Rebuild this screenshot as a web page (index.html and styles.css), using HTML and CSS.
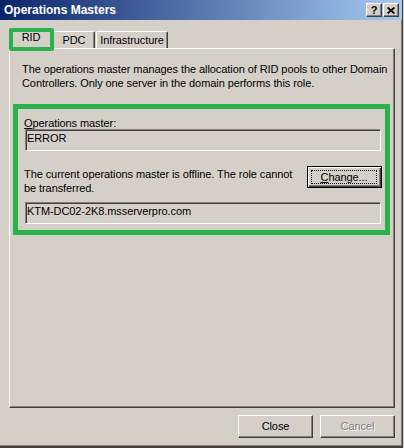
FILE: index.html
```html
<!DOCTYPE html>
<html>
<head>
<meta charset="utf-8">
<title>Operations Masters</title>
<link rel="stylesheet" href="styles.css">
</head>
<body>
<div class="window">
  <div class="titlebar">
    <span class="title">Operations Masters</span>
    <div class="tbtns">
      <span class="tbtn help">?</span>
      <span class="tbtn close"><svg width="8" height="7" viewBox="0 0 8 7"><path d="M0.6 0.5 L7.4 6.5 M7.4 0.5 L0.6 6.5" stroke="#000" stroke-width="1.7" fill="none"/></svg></span>
    </div>
  </div>
  <div class="content">
    <div class="tabs">
      <div class="tab selected">RID</div>
      <div class="tab pdc">PDC</div>
      <div class="tab infra">Infrastructure</div>
    </div>
    <div class="panel">
      <p class="desc">The operations master manages the allocation of RID pools to other Domain<br>Controllers. Only one server in the domain performs this role.</p>
      <div class="group">
        <div class="label"><u>O</u>perations master:</div>
        <div class="field">ERROR</div>
        <div class="row">
          <div class="msg">The current operations master is offline. The role cannot<br>be transferred.</div>
          <div class="btn default"><span class="focus"><u>C</u>hange...</span></div>
        </div>
        <div class="field">KTM-DC02-2K8.msserverpro.com</div>
      </div>
    </div>
    <div class="buttons">
      <div class="btn">Close</div>
      <div class="btn disabled">Cancel</div>
    </div>
  </div>
</div>
</body>
</html>
```

FILE: styles.css
```css
* { box-sizing: border-box; }
html, body { margin: 0; padding: 0; }
body {
  background: #d4d0c8;
  font-family: "Liberation Sans", Arial, sans-serif;
  font-size: 11px;
  letter-spacing: -0.08px;
  color: #000;
  width: 404px;
  height: 448px;
  overflow: hidden;
}
.window {
  width: 403px;
  height: 448px;
  display: flex;
  flex-direction: column;
  border-right: 1px solid #404040;
  border-bottom: 2px solid #404040;
  box-shadow: inset -1px -1px 0 #808080;
}
.titlebar {
  height: 20px;
  display: flex;
  align-items: center;
  justify-content: space-between;
  padding: 0 3px 0 4px;
  background: linear-gradient(to right, #0a246a, #a6caf0);
}
.title {
  color: #fff;
  font-weight: bold;
  font-size: 12px;
  letter-spacing: 0;
  line-height: 16px;
}
.tbtns { display: flex; gap: 1px; }
.tbtn {
  width: 16px;
  height: 14px;
  background: #d4d0c8;
  border-top: 1px solid #fff;
  border-left: 1px solid #fff;
  border-right: 1px solid #404040;
  border-bottom: 1px solid #404040;
  box-shadow: inset -1px -1px 0 #808080;
  display: flex;
  align-items: center;
  justify-content: center;
  font-weight: bold;
  font-size: 11px;
  letter-spacing: 0;
  line-height: 12px;
}
.content {
  padding: 9px 7px 0 9px;
  display: flex;
  flex-direction: column;
}
.tabs {
  display: flex;
  align-items: flex-end;
  height: 19px;
  position: relative;
  z-index: 1;
}
.tab {
  height: 17px;
  padding: 2px 0 0 0;
  text-align: center;
  line-height: 13px;
  background: #d4d0c8;
  border-top: 1px solid #fff;
  border-left: 1px solid #fff;
  border-right: 1px solid #404040;
  border-radius: 2px 2px 0 0;
  box-shadow: inset -1px 0 0 #808080;
}
.tab.selected {
  position: relative;
  width: 42px;
  height: 20px;
  margin: 0 0 -1px 1px;
  padding-top: 1px;
}
.tab.selected::after {
  content: "";
  position: absolute;
  top: -2px;
  left: -2px;
  right: -3px;
  bottom: -2px;
  border: 4px solid #2bb24c;
  border-radius: 2px;
}
.tab.pdc { width: 42px; margin-left: 1px; }
.tab.infra { width: 72px; margin-left: 1px; }
.panel {
  height: 360px;
  border-top: 1px solid #fff;
  border-left: 1px solid #fff;
  border-right: 1px solid #404040;
  border-bottom: 1px solid #404040;
  box-shadow: inset -1px -1px 0 #808080;
  padding: 13px 4px 0 3px;
}
.desc {
  margin: 0 0 0 9px;
  line-height: 14px;
  white-space: nowrap;
}
.group {
  margin-top: 14px;
  border: 5px solid #2bb24c;
  padding: 8px 4px 6px 6px;
}
.label {
  line-height: 12px;
}
.field {
  height: 22px;
  margin-left: 1px;
  padding: 2px 0 0 1px;
  line-height: 13px;
  border-top: 1px solid #808080;
  border-left: 1px solid #808080;
  border-right: 1px solid #fff;
  border-bottom: 1px solid #fff;
  box-shadow: inset 1px 1px 0 #404040;
  white-space: nowrap;
}
.row {
  margin-top: 16px;
  display: flex;
  justify-content: space-between;
  align-items: flex-start;
}
.msg { line-height: 14px; white-space: nowrap; }
.row + .field { margin-top: 7px; }
.btn {
  width: 75px;
  height: 23px;
  display: flex;
  align-items: center;
  justify-content: center;
  line-height: 13px;
  background: #d4d0c8;
  border-top: 1px solid #fff;
  border-left: 1px solid #fff;
  border-right: 1px solid #404040;
  border-bottom: 1px solid #404040;
  box-shadow: inset -1px -1px 0 #808080;
}
.btn.default {
  height: 22px;
  margin: -1px -1px 0 0;
  border: 1px solid #000;
  box-shadow: inset 1px 1px 0 #fff, inset -1px -1px 0 #404040, inset -2px -2px 0 #808080;
  padding: 3px 4px 3px 3px;
}
.focus {
  flex: 1;
  align-self: stretch;
  display: flex;
  align-items: center;
  justify-content: center;
  border: 1px dotted #000;
}
.buttons {
  margin-top: 7px;
  display: flex;
  justify-content: flex-end;
  gap: 7px;
}
.btn.disabled {
  color: #808080;
  text-shadow: 1px 1px 0 #fff;
}
```
